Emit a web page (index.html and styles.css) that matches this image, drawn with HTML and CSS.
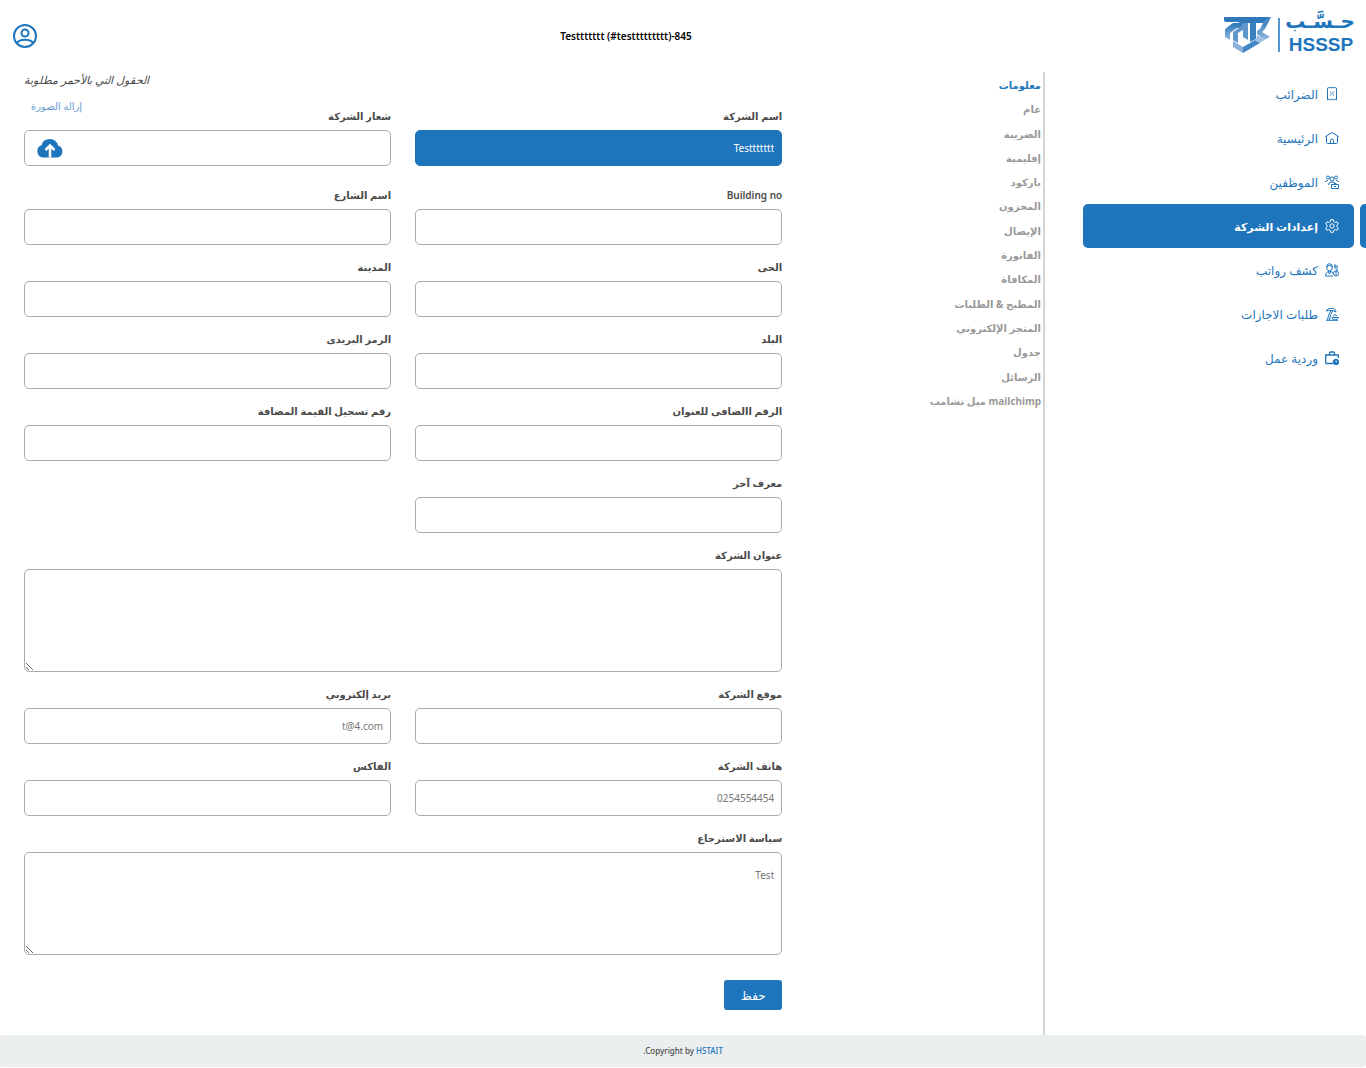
FILE: index.html
```html
<!DOCTYPE html>
<html lang="ar" dir="rtl">
<head>
    <meta charset="UTF-8">
    <meta name="viewport" content="width=device-width, initial-scale=1.0">
    <title>إعدادات الشركة</title>
    <link rel="stylesheet" href="styles.css">
</head>
<body>
    <header class="header">
        <a href="#" class="logo" aria-label="HSSSP">
            <svg width="132" height="52" viewBox="0 0 132 52" direction="ltr">
                <defs>
                    <linearGradient id="mark" x1="0" y1="0" x2="0" y2="1">
                        <stop offset="0" stop-color="#2a76b8"/>
                        <stop offset="1" stop-color="#8fb8df"/>
                    </linearGradient>
                </defs>
                <path d="M2 14H49L41 20H19L15 19H4L2 18Z" fill="#3179bb"/>
                <path d="M3 26L11 20H20V25H15L8 30V37L3 34Z" fill="url(#mark)"/>
                <path d="M20 20H26V37L21 34V27L16 30V40L11 37V29L20 23Z" fill="#5f97cd"/>
                <path d="M28 20H34V36L28 39Z" fill="#3b80c0"/>
                <path d="M11 38L21 44V50L11 44Z" fill="#89b1db"/>
                <path d="M21 44L33 37L38 40L21 50Z" fill="#4488c6"/>
                <path d="M41 20L49 14L43 26L40 29L48 34L42 37L35 31V28L38 26Z" fill="url(#mark)"/>
                <path d="M35 32L42 37L38 40L34 37Z" fill="#9bbde2"/>
                <path d="M57 15V49" stroke="#1e75bc" stroke-width="1.500"/>
                <text x="98" y="25" class="logo-ar">حـسَّـب</text>
                <text x="99" y="48" class="logo-en">HSSSP</text>
            </svg>
        </a>
        <div class="company" dir="ltr">Testtttttt (#testtttttttt)-845</div>
        <a href="#" class="user" aria-label="الحساب">
            <svg width="26" height="24" viewBox="0 0 26 24" fill="none" stroke="#1e75bc" stroke-width="2">
                <circle cx="13" cy="12" r="11"/>
                <circle cx="13" cy="9" r="3.500"/>
                <path d="M5 19C7 14.500 19 14.500 21 19"/>
            </svg>
        </a>
    </header>

    <div class="layout">
        <nav class="sidebar">
            <a href="#" class="nav-item">
                <svg class="icon" viewBox="0 0 14 14"><path d="M2.500 1.500Q2.500 .7 3.300 .7H10.700Q11.500 .7 11.500 1.500V13L10 12L8.500 13L7 12L5.500 13L4 12L2.500 13ZM5 8.500L9 4.500M5 5H6M8 8H9"/></svg>
                <span>الضرائب</span>
            </a>
            <a href="#" class="nav-item">
                <svg class="icon" viewBox="0 0 14 14"><path d="M.5 5.500L7 1.500L13.500 5.500M1.500 5V11.500Q1.500 12.500 2.500 12.500H11.500Q12.500 12.500 12.500 11.500V5M5.500 12.500V9.500Q5.500 8 7 8T8.500 9.500V12.500"/></svg>
                <span>الرئيسية</span>
            </a>
            <a href="#" class="nav-item">
                <svg class="icon" viewBox="0 0 14 14"><path d="M.5 7Q.5 5.500 3 5.500M3.500 10Q3.500 7 7 7T9 8M11 5.500Q13.500 5.500 13.500 7M6.500 9.500H13.500V13.500H6.500ZM9 9.500V8.500H11V9.500M9 11.500H11"/><circle cx="3" cy="2.500" r="1.500"/><circle cx="7" cy="4" r="2"/><circle cx="11" cy="2.500" r="1.500"/></svg>
                <span>الموظفين</span>
            </a>
            <a href="#" class="nav-item active">
                <svg class="icon" viewBox="0 0 14 14"><path d="M5.700 .7H8.300L8.700 2.600L10.200 3.400L12 2.800L13.300 5L11.900 6.300V7.700L13.300 9L12 11.200L10.200 10.600L8.700 11.400L8.300 13.300H5.700L5.300 11.400L3.800 10.600L2 11.200L.7 9L2.100 7.700V6.300L.7 5L2 2.800L3.800 3.400L5.300 2.600Z"/><circle cx="7" cy="7" r="2.200"/></svg>
                <span>إعدادات الشركة</span>
            </a>
            <a href="#" class="nav-item">
                <svg class="icon" viewBox="0 0 14 14"><path d="M1.500 4Q1.500 .7 4.500 .7T7.500 4M.6 13Q.6 8.500 4.500 8.500T8 11M.6 13H8M3.500 9L4.500 11L5.500 9M10 1V6M9 3L11.500 4M12 2V7M10.500 7.500H12.500"/><circle cx="4.500" cy="5" r="2.700"/><circle cx="11" cy="10.500" r="2.500"/><path d="M11 9V12"/></svg>
                <span>كشف رواتب</span>
            </a>
            <a href="#" class="nav-item">
                <svg class="icon" viewBox="0 0 14 14"><path d="M1 4Q3 .5 6 1.500Q10 .5 11 5Q9 3.500 6 3.500Q3 3 1 4M6 3.500Q3 8 2.500 13M8 3.500Q5 7 4.500 13M1 13.300H13M7 10.500H13.500Q12.500 13 10 13T7 10.500M8 9Q10 6 12 9"/></svg>
                <span>طلبات الاجازات</span>
            </a>
            <a href="#" class="nav-item">
                <svg class="icon" viewBox="0 0 14 14"><path d="M8 12.500H2Q.7 12.500 .7 11.200V4H13.300V7M4.500 4V2Q4.500 1 5.500 1H8.500Q9.500 1 9.500 2V4" stroke-width="1.300"/><circle cx="11" cy="11" r="2.800" fill="currentColor"/><path d="M11 9.500V11H12" stroke="#fff" stroke-width=".8"/></svg>
                <span>وردية عمل</span>
            </a>
        </nav>

        <main class="content">
            <ul class="tabs">
                <li><a href="#" class="active">معلومات</a></li>
                <li><a href="#">عام</a></li>
                <li><a href="#">الضريبة</a></li>
                <li><a href="#">إقليمية</a></li>
                <li><a href="#">باركود</a></li>
                <li><a href="#">المخزون</a></li>
                <li><a href="#">الإيصال</a></li>
                <li><a href="#">الفاتورة</a></li>
                <li><a href="#">المكافاة</a></li>
                <li><a href="#">المطبخ &amp; الطلبات</a></li>
                <li><a href="#">المتجر الإلكتروني</a></li>
                <li><a href="#">جدول</a></li>
                <li><a href="#">الرسائل</a></li>
                <li><a href="#">mailchimp ميل تشامب</a></li>
            </ul>

            <form class="form">
                <p class="note">الحقول التي بالأحمر مطلوبة</p>
                <div class="grid">
                    <div class="field first">
                        <label for="name">اسم الشركة</label>
                        <input type="text" id="name" class="filled" value="Testtttttt">
                    </div>
                    <div class="field first">
                        <div class="field-head">
                            <label for="logo">شعار الشركة</label>
                            <a href="#" class="remove">إزالة الصورة</a>
                        </div>
                        <label class="upload" for="logo">
                            <input type="file" id="logo" class="file">
                            <svg width="28" height="20" viewBox="0 0 28 20">
                                <path d="M7 19.500A6.300 6.300 0 0 1 5.500 7.300A8.500 8.500 0 0 1 22 7.500A6.200 6.200 0 0 1 21.500 19.500Z" fill="#1e75bc"/>
                                <path d="M14 19.500V8M9.500 12L14 7.500L18.500 12" fill="none" stroke="#fff" stroke-width="2.500"/>
                            </svg>
                        </label>
                    </div>
                    <div class="field">
                        <label for="building">Building no</label>
                        <input type="text" id="building">
                    </div>
                    <div class="field">
                        <label for="street">اسم الشارع</label>
                        <input type="text" id="street">
                    </div>
                    <div class="field">
                        <label for="district">الحى</label>
                        <input type="text" id="district">
                    </div>
                    <div class="field">
                        <label for="city">المدينة</label>
                        <input type="text" id="city">
                    </div>
                    <div class="field">
                        <label for="country">البلد</label>
                        <input type="text" id="country">
                    </div>
                    <div class="field">
                        <label for="postal">الرمز البريدى</label>
                        <input type="text" id="postal">
                    </div>
                    <div class="field">
                        <label for="additional">الرقم االضافى للعنوان</label>
                        <input type="text" id="additional">
                    </div>
                    <div class="field">
                        <label for="vat">رقم تسجيل القيمة المضافة</label>
                        <input type="text" id="vat">
                    </div>
                    <div class="field">
                        <label for="other">معرف آخر</label>
                        <input type="text" id="other">
                    </div>
                    <div class="field wide">
                        <label for="address">عنوان الشركة</label>
                        <textarea id="address"></textarea>
                    </div>
                    <div class="field">
                        <label for="website">موقع الشركة</label>
                        <input type="text" id="website">
                    </div>
                    <div class="field">
                        <label for="email">بريد إلكتروني</label>
                        <input type="text" id="email" value="t@4.com">
                    </div>
                    <div class="field">
                        <label for="phone">هاتف الشركة</label>
                        <input type="text" id="phone" value="0254554454">
                    </div>
                    <div class="field">
                        <label for="fax">الفاكس</label>
                        <input type="text" id="fax">
                    </div>
                    <div class="field wide">
                        <label for="policy">سياسة الاسترجاع</label>
                        <textarea id="policy">Test</textarea>
                    </div>
                </div>
                <button type="submit" class="save">حفظ</button>
            </form>
        </main>
    </div>

    <footer class="footer">Copyright by <a href="#">HSTAIT</a>.</footer>
</body>
</html>
```
FILE: styles.css
```css
* {
    box-sizing: border-box;
}
body {
    margin: 0;
    font-family: "Noto Sans", "DejaVu Sans", sans-serif;
    font-size: 10px;
    color: #4a4a4a;
    background: #fff;
}
a {
    color: #1e75bc;
    text-decoration: none;
}
.header {
    display: flex;
    align-items: center;
    justify-content: space-between;
    height: 72px;
    padding: 0 12px;
}
.logo svg, .user svg {
    display: block;
}
.logo {
    padding-bottom: 14px;
}
.logo-ar, .logo-en {
    fill: #1e75bc;
    font-weight: bold;
    text-anchor: middle;
}
.logo-ar {
    font-family: "DejaVu Sans", sans-serif;
    font-size: 20px;
}
.logo-en {
    font-family: "Liberation Sans", sans-serif;
    font-size: 19px;
}
.company {
    padding-right: 8px;
    color: #000;
    font-weight: 600;
}
.layout {
    display: flex;
}
.sidebar {
    width: 321px;
    flex-shrink: 0;
    padding-right: 12px;
    padding-left: 38px;
}
.nav-item {
    position: relative;
    display: flex;
    align-items: center;
    gap: 7px;
    height: 44px;
    padding: 0 15px;
    border-radius: 5px;
    font-size: 12px;
}
.nav-item.active {
    background: #1e75bc;
    color: #fff;
    font-size: 11px;
    font-weight: bold;
}
.nav-item.active::before {
    content: "";
    position: absolute;
    top: 0;
    right: -12px;
    width: 6px;
    height: 44px;
    background: #1e75bc;
    border-radius: 5px 0 0 5px;
}
.icon {
    width: 14px;
    height: 14px;
    fill: none;
    stroke: currentColor;
    stroke-width: 1;
}
.content {
    flex: 1;
    display: flex;
    border-right: 2px solid #d5d5d5;
}
.tabs {
    display: flex;
    flex-direction: column;
    justify-content: space-between;
    width: 25%;
    height: 340px;
    margin: 1px 0 0;
    padding: 0 2px 0 0;
    list-style: none;
    font-size: 10px;
    font-weight: bold;
    line-height: 24px;
}
.tabs a {
    color: #999;
}
.tabs .active {
    color: #1e75bc;
}
.form {
    flex: 1;
    padding: 0 0 25px 24px;
}
.note {
    margin: 0 0 6px;
    line-height: 16px;
    text-align: left;
    font-size: 11px;
    font-style: italic;
}
.grid {
    display: grid;
    grid-template-columns: 1fr 1fr;
    column-gap: 24px;
}
.field {
    padding-top: 8px;
}
.first {
    padding-bottom: 7px;
}
.wide {
    grid-column: span 2;
}
.field label {
    display: block;
    line-height: 28px;
    font-weight: 600;
}
.field-head {
    display: flex;
    justify-content: space-between;
}
.remove {
    margin-top: -8px;
    padding-left: 7px;
    line-height: 24px;
    opacity: 0.7;
}
.field input, .field textarea, .field .upload {
    display: block;
    width: 100%;
    height: 36px;
    padding: 0 7px;
    border: 1px solid #aaa;
    border-radius: 5px;
    background: #fff;
    color: #777;
    font-family: inherit;
    font-size: 10px;
}
.field textarea {
    height: 103px;
    padding: 15px 7px;
    resize: both;
}
.field .filled {
    border-color: #1e75bc;
    background: #1e75bc;
    color: #fff;
}
.field .upload {
    display: flex;
    align-items: center;
    justify-content: flex-end;
    padding: 0 11px;
    cursor: pointer;
}
.field .file {
    width: 1px;
    height: 1px;
    padding: 0;
    border: 0;
    opacity: 0;
}
.save {
    display: block;
    min-width: 58px;
    height: 30px;
    margin-top: 25px;
    border: none;
    border-radius: 3px;
    background: #1e75bc;
    color: #fff;
    font-family: inherit;
    font-size: 12px;
    cursor: pointer;
}
.footer {
    height: 32px;
    line-height: 32px;
    background: #ebeff0;
    text-align: center;
    font-size: 8px;
    font-weight: 500;
    border-radius: 3px;
}
```
